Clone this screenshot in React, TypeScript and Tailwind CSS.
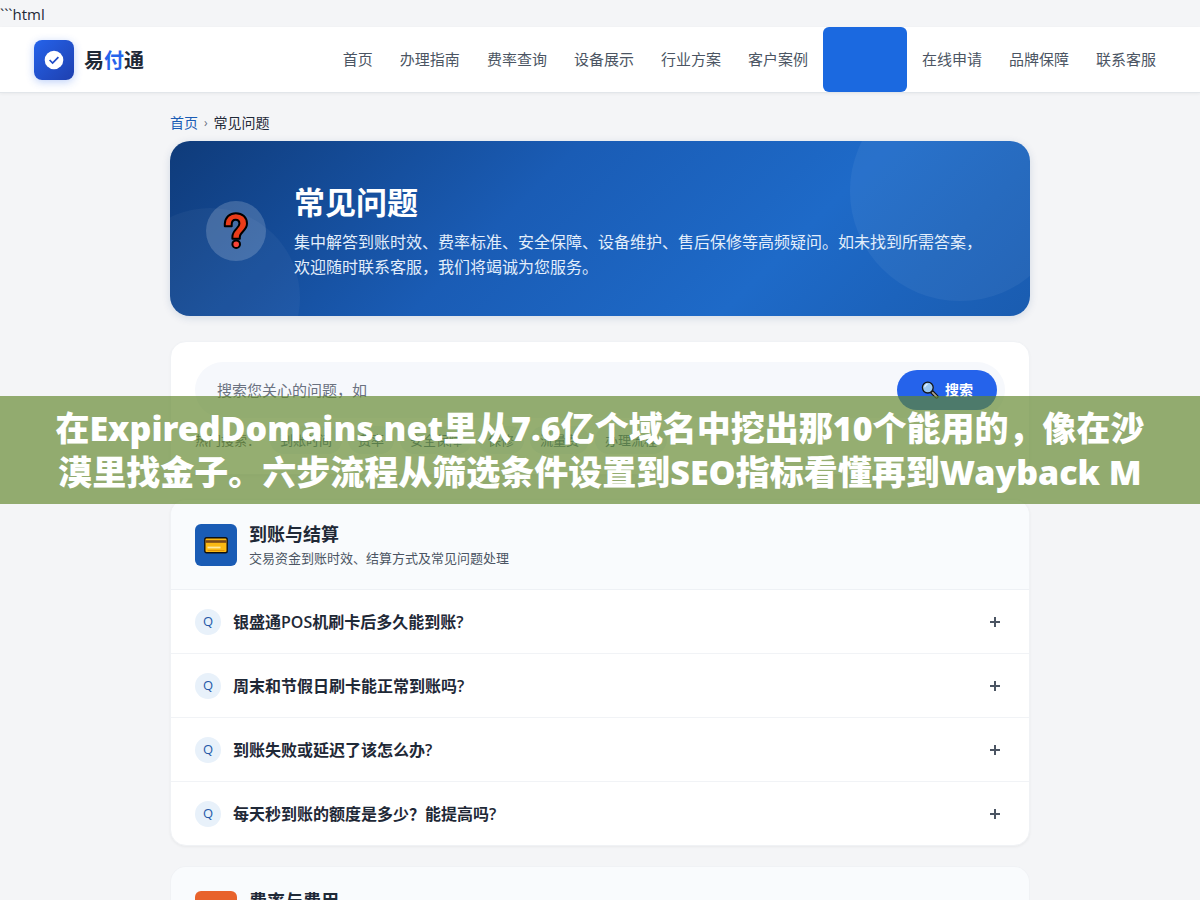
import React from "react";

const navItems = [
  { label: "首页" },
  { label: "办理指南" },
  { label: "费率查询" },
  { label: "设备展示" },
  { label: "行业方案" },
  { label: "客户案例" },
  { label: "常见问题", active: true },
  { label: "在线申请" },
  { label: "品牌保障" },
  { label: "联系客服" },
];

const hotTags = ["到账时间", "费率", "安全保障", "保修", "流量费", "办理流程"];

const questions = [
  "银盛通POS机刷卡后多久能到账?",
  "周末和节假日刷卡能正常到账吗?",
  "到账失败或延迟了该怎么办?",
  "每天秒到账的额度是多少？能提高吗?",
];

function LogoMark() {
  return (
    <span className="flex size-10 items-center justify-center rounded-lg bg-linear-to-br from-[#2563eb] to-[#1e40af] shadow-[0_2px_8px_rgba(37,99,235,0.3)]">
      <svg width="20" height="20" viewBox="0 0 20 20" aria-hidden="true">
        <circle cx="10" cy="10" r="9.3" fill="#fff" />
        <path d="M5.6 10l3 3.1 5.8-5.9" fill="none" stroke="#1e4bc8" strokeWidth="1.7" />
      </svg>
    </span>
  );
}

function QuestionMark() {
  return (
    <svg width="26" height="38" viewBox="0 0 26 38" aria-hidden="true">
      <path
        d="M1.8 14.2V11.6C2.2 5.2 6.8 1.2 12.8 1.2c6.6 0 11.2 4 11.2 10.4 0 7.2-7.2 8.2-7.2 13.4v1.8H9.4V25c0-7.6 7-8.6 7-13.2 0-2.6-1.4-4-3.8-4-2.6 0-3.9 1.7-3.9 4.6v1.8z"
        fill="#ea3c1a"
        stroke="#000"
        strokeWidth="2"
        strokeLinejoin="round"
      />
      <circle cx="13.2" cy="32.2" r="3.8" fill="#f84438" stroke="#000" strokeWidth="2" />
    </svg>
  );
}

function MagnifierIcon() {
  return (
    <svg width="18" height="18" viewBox="0 0 18 18" aria-hidden="true">
      <path d="M10 10l5.6 5.6" stroke="#151515" strokeWidth="4" strokeLinecap="round" />
      <path d="M11.6 11.6l4 4" stroke="#a8a090" strokeWidth="1.8" strokeLinecap="round" />
      <circle cx="6.8" cy="6.6" r="5.4" fill="#9cc9f3" stroke="#151515" strokeWidth="1.3" />
      <path d="M3.8 6.2a3.2 3.2 0 0 1 2.8-2.8" fill="none" stroke="#e3f2ff" strokeWidth="1.2" />
    </svg>
  );
}

function CardIcon() {
  return (
    <svg width="24" height="18" viewBox="0 0 24 18" aria-hidden="true">
      <rect x="0.8" y="1.8" width="22.4" height="15" rx="1.8" fill="#fbb914" stroke="#111" strokeWidth="1.4" />
      <rect x="1.5" y="4.2" width="21" height="2.6" fill="#7a4a1a" />
      <rect x="3.5" y="10.6" width="13" height="1.8" fill="#ffe9a0" />
      <rect x="3.5" y="14" width="17" height="1" fill="#e0930a" />
    </svg>
  );
}

function Header() {
  return (
    <header className="flex h-[66px] items-center justify-between border-b border-[#e2e6ea] bg-white pr-8 pl-[34px] shadow-[0_1px_3px_rgba(0,0,0,0.05)]">
      <a href="#" className="flex items-center gap-2.5">
        <LogoMark />
        <span className="pt-0.5 text-xl font-bold text-[#1f2937]">
          易<span className="text-[#2563eb]">付</span>通
        </span>
      </a>
      <nav className="flex h-full gap-[3px] text-[15px] text-[#4b5563]">
        {navItems.map((item) => (
          <a
            key={item.label}
            href="#"
            className={
              item.active
                ? "flex items-center rounded-md bg-[#1b69e0] px-3 text-[#1b69e0]"
                : "flex items-center px-3"
            }
          >
            {item.label}
          </a>
        ))}
      </nav>
    </header>
  );
}

function Hero() {
  return (
    <section className="relative flex items-center gap-7 overflow-hidden rounded-[20px] bg-[linear-gradient(135deg,#0f3b7a_0%,#1a5cb5_40%,#1e6ac8_70%,#1a5cb0_100%)] px-9 pt-[41px] pb-9 text-white shadow-[0_2px_8px_rgba(15,59,122,0.14)]">
      <div className="absolute -top-[60px] -right-10 size-[220px] rounded-full bg-white/5" />
      <div className="absolute -bottom-[72px] -left-[50px] size-[180px] rounded-full bg-white/4" />
      <div className="relative flex size-[60px] shrink-0 items-center justify-center rounded-full bg-white/18">
        <QuestionMark />
      </div>
      <div className="relative">
        <h1 className="mb-2 text-[31px] leading-10 font-bold">常见问题</h1>
        <p className="text-base leading-[25px] text-[#e3eefb]">
          集中解答到账时效、费率标准、安全保障、设备维护、售后保修等高频疑问。如未找到所需答案，欢迎随时联系客服，我们将竭诚为您服务。
        </p>
      </div>
    </section>
  );
}

function SearchCard() {
  return (
    <section className="mt-[25px] rounded-2xl border border-[#f0f2f5] bg-white px-6 py-5 shadow-[0_1px_3px_rgba(0,0,0,0.03)]">
      <form className="flex h-14 items-center rounded-full bg-[#f6f8fc] pr-2 pl-[22px]">
        <input
          type="text"
          aria-label="搜索问题"
          placeholder="搜索您关心的问题，如"
          className="min-w-0 flex-1 bg-transparent text-[15px] outline-none placeholder:text-[#6b7280]"
        />
        <button
          type="button"
          className="flex h-10 items-center gap-1.5 rounded-full bg-[#2563eb] px-6 text-sm font-bold text-white"
        >
          <MagnifierIcon />
          搜索
        </button>
      </form>
      <div className="mt-2 flex items-center gap-1.5 text-[13px] leading-5 text-[#5b6675]">
        <span className="mr-1">热门搜索：</span>
        {hotTags.map((tag) => (
          <a key={tag} href="#" className="rounded-full bg-[#eef4fa] px-2.5 py-1 text-[#4a6a90]">
            {tag}
          </a>
        ))}
      </div>
    </section>
  );
}

function CategoryHeader({
  title,
  desc,
  iconClass,
  children,
}: {
  title: string;
  desc: string;
  iconClass: string;
  children?: React.ReactNode;
}) {
  return (
    <div className="flex gap-3 border-b border-[#eef1f5] bg-[#f9fbfd] px-6 pt-6 pb-[17px]">
      <div className={`flex size-[42px] items-center justify-center rounded-md ${iconClass}`}>{children}</div>
      <div>
        <h2 className="text-lg leading-5 font-bold text-[#1f2937]">{title}</h2>
        <p className="text-[13px] leading-7 text-[#4b5563]">{desc}</p>
      </div>
    </div>
  );
}

function QuestionRow({ text }: { text: string }) {
  return (
    <li className="border-b border-[#f1f3f6] last:border-b-0">
      <button type="button" className="flex h-[63px] w-full items-center gap-3 px-6 text-left">
        <span className="flex size-[26px] items-center justify-center rounded-full bg-[#e8f1fa] text-[13px] font-medium text-[#2558a8]">
          Q
        </span>
        <span className="flex-1 text-base font-semibold text-[#1f2937]">{text}</span>
        <svg width="20" height="20" viewBox="0 0 20 20" aria-hidden="true">
          <path d="M10 5v10M5 10h10" stroke="#4b5563" strokeWidth="2" />
        </svg>
      </button>
    </li>
  );
}

export default function App() {
  return (
    <div className="relative h-screen overflow-hidden bg-[#f4f5f7] font-['Open_Sans','Noto_Sans_CJK_SC',sans-serif] text-[#1f2937]">
      <div className="h-[27px] text-[15px] leading-7">```html</div>
      <Header />

      <main className="mx-auto max-w-[860px]">
        <nav className="flex h-12 items-center gap-1.5 pt-3 text-sm">
          <a href="#" className="text-[#1a5cb5]">首页</a>
          <span className="text-xs text-[#6b7280]">›</span>
          <span>常见问题</span>
        </nav>

        <Hero />
        <SearchCard />

        <section className="mt-6 overflow-hidden rounded-2xl border border-[#f0f2f5] bg-white shadow-[0_1px_3px_rgba(0,0,0,0.05)]">
          <CategoryHeader
            title="到账与结算"
            desc="交易资金到账时效、结算方式及常见问题处理"
            iconClass="bg-[#1a5cb5]"
          >
            <CardIcon />
          </CategoryHeader>
          <ul>
            {questions.map((question) => (
              <QuestionRow key={question} text={question} />
            ))}
          </ul>
        </section>

        <section className="mt-5 overflow-hidden rounded-2xl border border-[#f0f2f5] bg-white">
          <CategoryHeader title="费率与费用" desc="刷卡费率标准及费用说明" iconClass="bg-[#e8632c]" />
        </section>
      </main>

      {/* Announcement band laid over the page */}
      <div className="absolute inset-x-0 top-[396px] flex h-[108px] items-center justify-center bg-[#61862b]/67 px-12 text-center font-['Noto_Sans','Noto_Sans_CJK_SC',sans-serif] text-[34px] leading-[44px] font-black text-white">
        <p>
          在ExpiredDomains.net里从7.6亿个域名中挖出那10个能用的，像在沙
          <br />
          漠里找金子。六步流程从筛选条件设置到SEO指标看懂再到Wayback M
        </p>
      </div>
    </div>
  );
}
